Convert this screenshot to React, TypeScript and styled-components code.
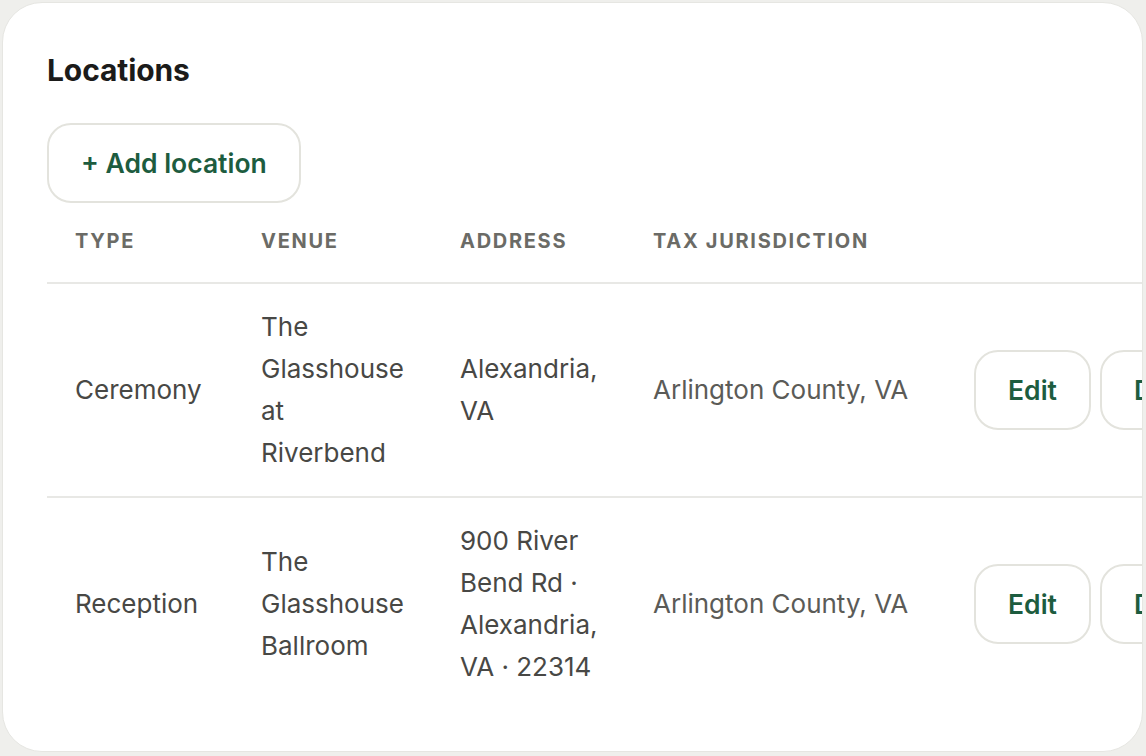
import React from "react";
import styled, { createGlobalStyle } from "styled-components";

const Global = createGlobalStyle`
  html, body { margin: 0; padding: 0; background: #efefec; }
  body { font-family: "Inter", "Noto Sans", sans-serif; -webkit-font-smoothing: antialiased; }
  * { box-sizing: border-box; }
`;

const Card = styled.section`
  margin: 2px 3px 0 2px;
  height: 750px;
  background: #ffffff;
  border: 1px solid #e6e6e2;
  border-radius: 40px;
  overflow: hidden;
  padding: 45px 0 0 44px;
`;

const Title = styled.h2`
  margin: 2px 0 33px 0;
  font-size: 30px;
  line-height: 40px;
  font-weight: 700;
  color: #1b1b1a;
  letter-spacing: -0.1px;
`;

const OutlineButton = styled.button<{ $w?: number }>`
  height: 80px;
  width: ${(p) => (p.$w ? `${p.$w}px` : "auto")};
  padding: 0 32px;
  border: 2px solid #e3e3dd;
  border-radius: 24px;
  background: #ffffff;
  color: #1d5c3f;
  font-family: inherit;
  font-size: 26.5px;
  font-weight: 600;
  flex-shrink: 0;
`;

const Table = styled.table`
  border-collapse: collapse;
  table-layout: fixed;
  width: 1300px;
`;

const Th = styled.th<{ $w: number }>`
  width: ${(p) => p.$w}px;
  height: 80px;
  padding: 0 28px 4px;
  text-align: left;
  font-size: 20px;
  font-weight: 700;
  letter-spacing: 1.7px;
  text-transform: uppercase;
  color: #6b6b66;
  border-bottom: 2px solid #e8e8e5;
`;

const Tr = styled.tr<{ $last?: boolean }>`
  border-bottom: ${(p) => (p.$last ? "none" : "2px solid #e8e8e5")};
`;

const Td = styled.td<{ $muted?: boolean }>`
  padding: 22px 28px;
  vertical-align: middle;
  font-size: 26px;
  line-height: 42px;
  color: ${(p) => (p.$muted ? "#5b5b57" : "#484845")};
`;

const Actions = styled.div`
  display: flex;
  gap: 9px;
`;

const rows = [
  {
    type: "Ceremony",
    venue: "The Glasshouse at Riverbend",
    address: "Alexandria, VA",
    tax: "Arlington County, VA",
  },
  {
    type: "Reception",
    venue: "The Glasshouse Ballroom",
    address: "900 River Bend Rd · Alexandria, VA · 22314",
    tax: "Arlington County, VA",
  },
];

export default function App() {
  return (
    <>
      <Global />
      <Card>
        <Title>Locations</Title>
        <OutlineButton>+ Add location</OutlineButton>
        <Table>
          <thead>
            <tr>
              <Th $w={186}>Type</Th>
              <Th $w={199}>Venue</Th>
              <Th $w={193}>Address</Th>
              <Th $w={321}>Tax jurisdiction</Th>
              <Th $w={401}></Th>
            </tr>
          </thead>
          <tbody>
            {rows.map((r, i) => (
              <Tr key={i} $last={i === rows.length - 1}>
                <Td>{r.type}</Td>
                <Td>{r.venue}</Td>
                <Td>{r.address}</Td>
                <Td $muted>{r.tax}</Td>
                <Td>
                  <Actions>
                    <OutlineButton $w={117}>Edit</OutlineButton>
                    <OutlineButton>Delete</OutlineButton>
                  </Actions>
                </Td>
              </Tr>
            ))}
          </tbody>
        </Table>
      </Card>
    </>
  );
}
